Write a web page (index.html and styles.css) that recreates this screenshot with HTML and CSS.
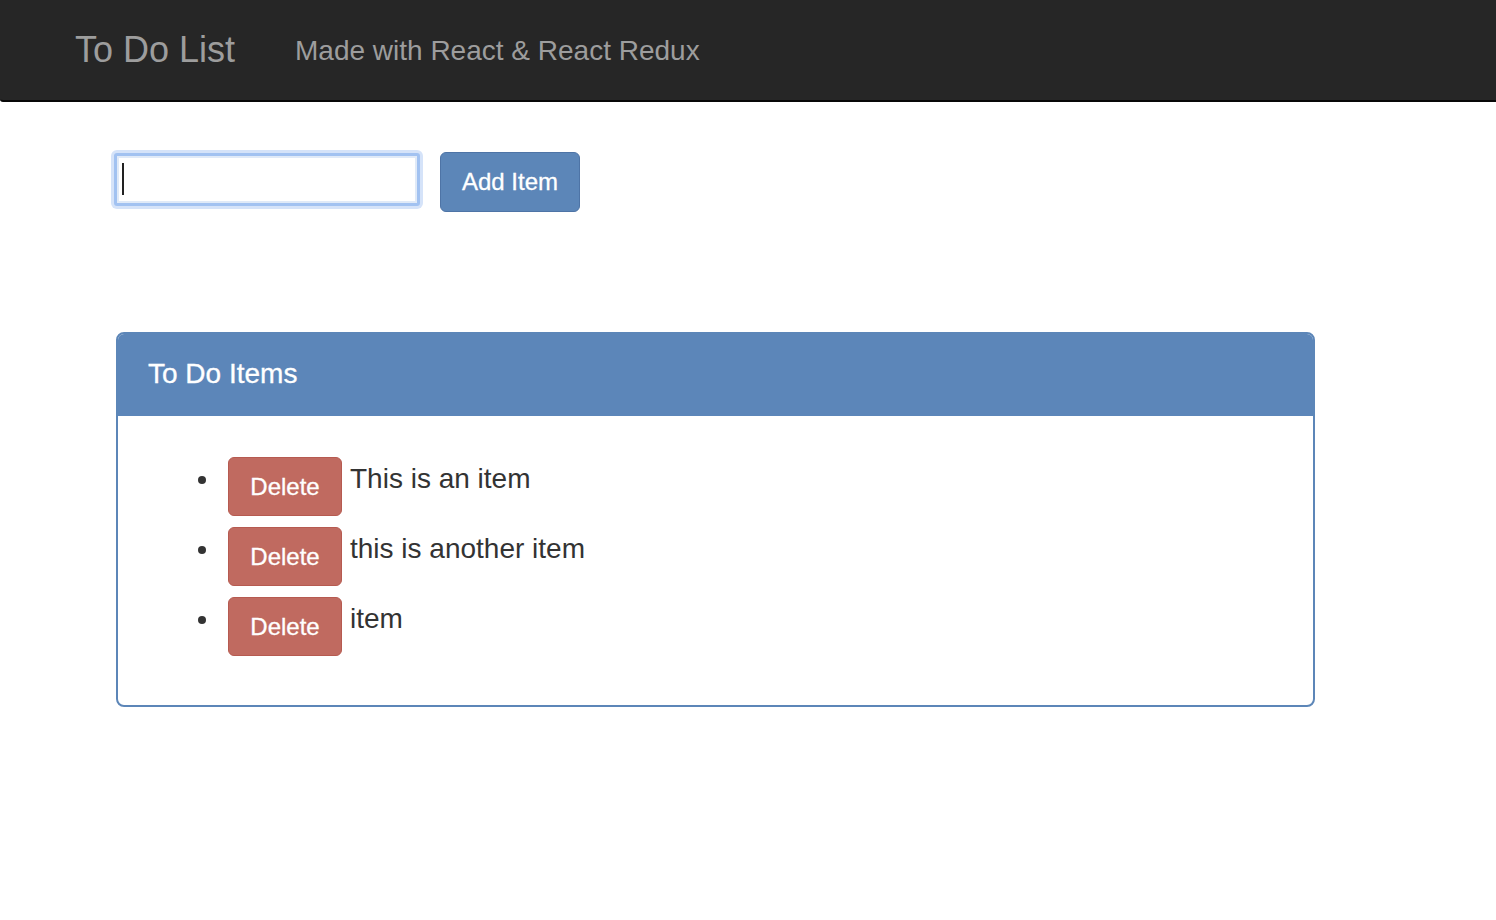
FILE: index.html
```html
<!DOCTYPE html>
<html lang="en">
<head>
<meta charset="utf-8">
<title>To Do List</title>
<link rel="stylesheet" href="styles.css">
</head>
<body>
<nav class="navbar">
  <a class="brand" href="#">To Do List</a>
  <span class="nav-text">Made with React &amp; React Redux</span>
</nav>
<main class="container">
  <form class="add-form">
    <div class="input-wrap">
      <input class="text-input" type="text" aria-label="New item">
      <span class="caret"></span>
    </div>
    <button class="btn btn-primary" type="button">Add Item</button>
  </form>
  <section class="panel">
    <div class="panel-heading"><h3 class="panel-title">To Do Items</h3></div>
    <div class="panel-body">
      <ul class="items">
        <li class="item"><button class="btn btn-danger" type="button">Delete</button>This is an item</li>
        <li class="item"><button class="btn btn-danger" type="button">Delete</button>this is another item</li>
        <li class="item"><button class="btn btn-danger" type="button">Delete</button>item</li>
      </ul>
    </div>
  </section>
</main>
</body>
</html>
```
FILE: styles.css
```css
* { box-sizing: border-box; }
html, body { margin: 0; padding: 0; }
body {
  font-family: "Liberation Sans", Arial, sans-serif;
  color: #333;
  background: #fff;
}
.navbar {
  display: flex;
  align-items: flex-start;
  height: 102px;
  padding-left: 75px;
  background: #262626;
  border-bottom: 2px solid #080808;
  border-bottom-left-radius: 3px;
}
.brand {
  display: block;
  width: 220px;
  margin-top: 32px;
  font-size: 36px;
  line-height: 36px;
  color: #9d9d9d;
  text-decoration: none;
}
.nav-text {
  display: block;
  margin-top: 37px;
  font-size: 28px;
  line-height: 28px;
  color: #9d9d9d;
}
.container {
  padding: 0 0 0 116px;
}
.add-form {
  display: flex;
  align-items: flex-start;
  margin: 50px 0 0 0;
}
.input-wrap {
  position: relative;
  margin-left: -2px;
  margin-top: 1px;
}
.text-input {
  display: block;
  width: 306px;
  height: 53px;
  margin: 0;
  padding: 0 8px;
  font-family: inherit;
  font-size: 28px;
  border: 3px solid #a2c2f1;
  border-radius: 3px;
  background: #fff;
  box-shadow: 0 0 0 3px #d5e3f9, inset 0 0 0 2px #e0eaf8;
  outline: none;
}
.caret {
  position: absolute;
  left: 8px;
  top: 10px;
  width: 2px;
  height: 32px;
  background: #222;
}
.btn {
  display: inline-block;
  margin: 0;
  font-family: inherit;
  font-size: 24px;
  color: #fff;
  border-radius: 6px;
  cursor: pointer;
  text-align: center;
  padding: 0;
}
.btn-primary {
  width: 140px;
  height: 60px;
  margin-left: 20px;
  background: #5c86b8;
  border: 1px solid #4e74a6;
  -webkit-text-stroke: 0.3px #fff;
}
.panel {
  width: 1199px;
  margin-top: 120px;
  border: 2px solid #5c86b8;
  border-radius: 8px;
  overflow: hidden;
}
.panel-heading {
  display: flex;
  align-items: center;
  height: 82px;
  padding: 0 0 3px 30px;
  background: #5c86b9;
}
.panel-title {
  margin: 0;
  font-size: 28px;
  font-weight: normal;
  line-height: normal;
  color: #fff;
  -webkit-text-stroke: 0.3px #fff;
}
.panel-body {
  padding: 40px 0 39px 0;
}
.items {
  margin: 0;
  padding-left: 110px;
  list-style: none;
  font-size: 28px;
  line-height: 46px;
}
.item {
  position: relative;
  height: 70px;
}
.item::before {
  content: "";
  position: absolute;
  left: -30px;
  top: 20px;
  width: 8px;
  height: 8px;
  border-radius: 50%;
  background: #333;
}
.btn-danger {
  float: left;
  width: 114px;
  height: 59px;
  margin: 1px 8px 0 0;
  line-height: 56px;
  background: #c06a60;
  border: 1px solid #b65a50;
  -webkit-text-stroke: 0.3px #fff;
}
```
